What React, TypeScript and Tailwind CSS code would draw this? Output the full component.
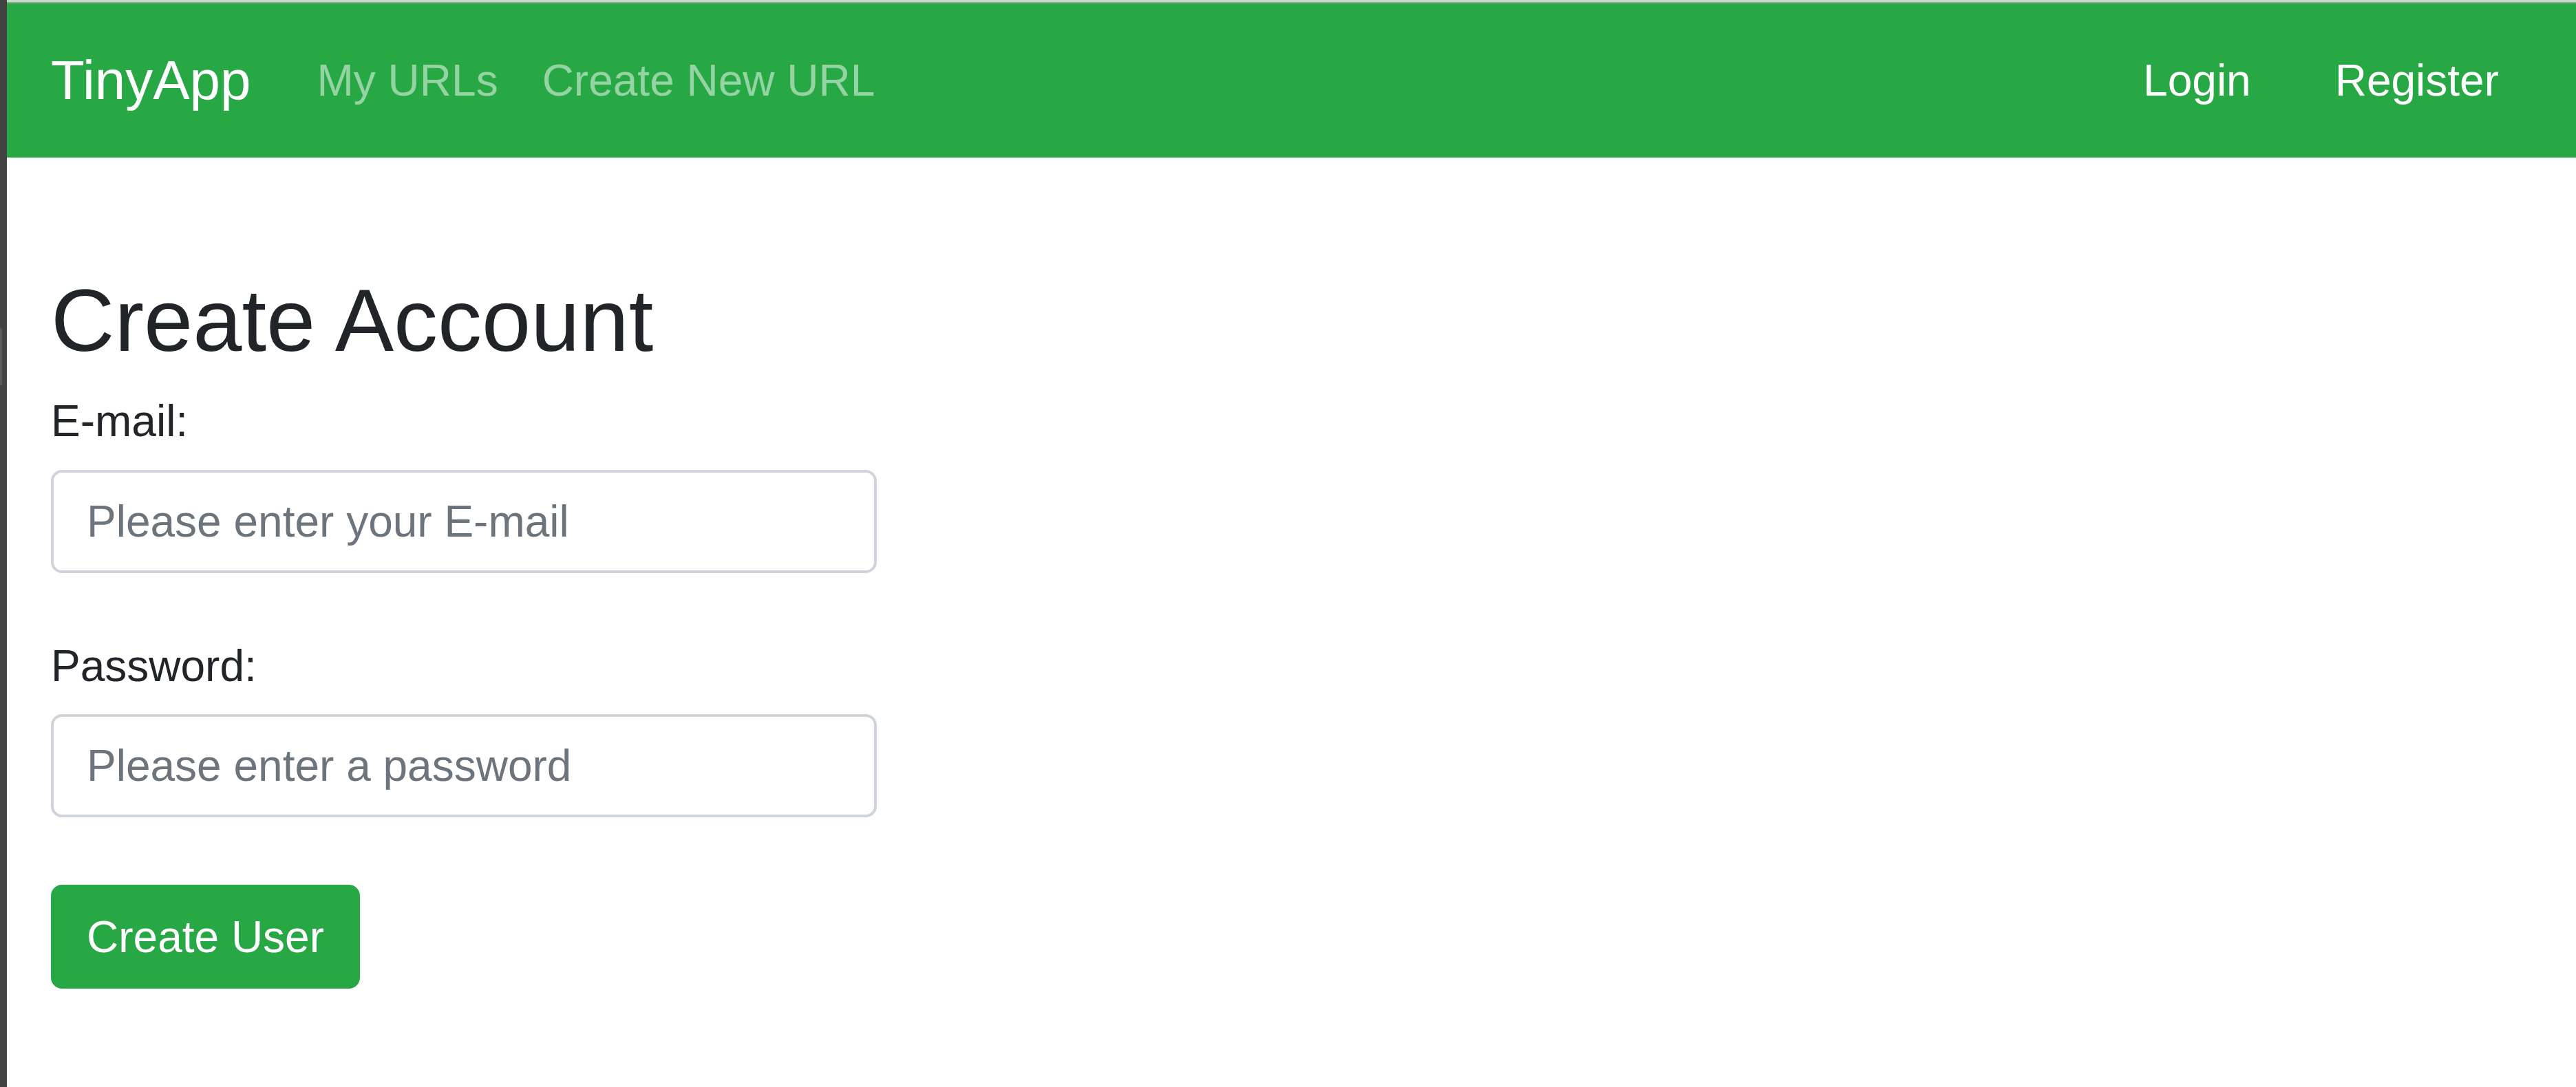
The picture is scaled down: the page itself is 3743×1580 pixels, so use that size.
import React from "react";

export default function App() {
  return (
    <div className="flex min-h-[1580px] w-full bg-white font-['Liberation_Sans',Arial,sans-serif]">
      <div className="relative w-[10px] shrink-0 bg-[#434343]">
        <div className="absolute left-0 top-[477px] h-[83px] w-[3px] rounded-r-[2px] bg-[#5a5a5a]" />
      </div>
      <div className="flex min-w-0 flex-1 flex-col">
        <div className="h-[3px] bg-[#c3dcc5]" />
        <div className="h-[2px] bg-[#86a98a]" />
        <nav className="flex h-[224px] items-center bg-[#28a745] pl-[64px] pr-[80px]">
          <a className="mr-[64px] py-[20px] text-[80px] leading-[120px] text-white">TinyApp</a>
          <a className="px-[32px] py-[32px] text-[64px] leading-[96px] text-white/50">My URLs</a>
          <a className="px-[32px] py-[32px] text-[64px] leading-[96px] text-white/50">Create New URL</a>
          <div className="ml-auto flex items-center gap-[58px]">
            <a className="px-[32px] py-[32px] text-[64px] leading-[96px] text-white">Login</a>
            <a className="px-[32px] py-[32px] text-[64px] leading-[96px] text-white">Register</a>
          </div>
        </nav>
        <main className="flex flex-col items-start pl-[64px] pt-[160px] text-[#212529]">
          <h2 className="text-[128px] font-normal leading-[154px]">Create Account</h2>
          <label className="mt-[21px] block text-[64px] leading-[96px]">E-mail:</label>
          <input
            type="email"
            placeholder="Please enter your E-mail"
            className="mt-[23px] h-[150px] w-[1200px] rounded-[16px] border-[4px] border-[#ced4da] bg-white px-[48px] text-[64px] leading-[96px] text-[#495057] outline-none placeholder:text-[#6c757d]"
          />
          <label className="mt-[87px] block text-[64px] leading-[96px]">Password:</label>
          <input
            type="password"
            placeholder="Please enter a password"
            className="mt-[22px] h-[150px] w-[1200px] rounded-[16px] border-[4px] border-[#ced4da] bg-white px-[48px] text-[64px] leading-[96px] text-[#495057] outline-none placeholder:text-[#6c757d]"
          />
          <button className="mt-[98px] flex h-[151px] items-center rounded-[16px] border-[4px] border-[#28a745] bg-[#28a745] px-[48px] text-[64px] leading-[96px] text-white">
            Create User
          </button>
        </main>
      </div>
    </div>
  );
}
